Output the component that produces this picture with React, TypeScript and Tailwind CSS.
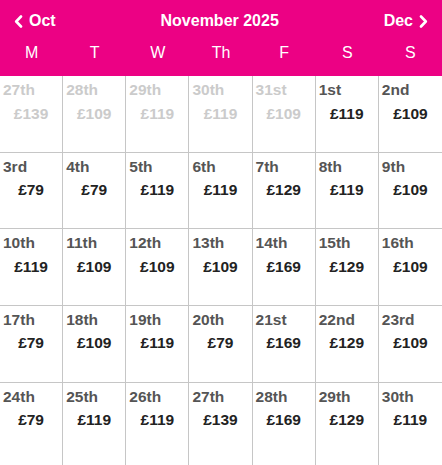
import React from "react";

type Cell = { d: string; p: string; out?: boolean };

const rows: Cell[][] = [
  [
    { d: "27th", p: "£139", out: true },
    { d: "28th", p: "£109", out: true },
    { d: "29th", p: "£119", out: true },
    { d: "30th", p: "£119", out: true },
    { d: "31st", p: "£109", out: true },
    { d: "1st", p: "£119" },
    { d: "2nd", p: "£109" },
  ],
  [
    { d: "3rd", p: "£79" },
    { d: "4th", p: "£79" },
    { d: "5th", p: "£119" },
    { d: "6th", p: "£119" },
    { d: "7th", p: "£129" },
    { d: "8th", p: "£119" },
    { d: "9th", p: "£109" },
  ],
  [
    { d: "10th", p: "£119" },
    { d: "11th", p: "£109" },
    { d: "12th", p: "£109" },
    { d: "13th", p: "£109" },
    { d: "14th", p: "£169" },
    { d: "15th", p: "£129" },
    { d: "16th", p: "£109" },
  ],
  [
    { d: "17th", p: "£79" },
    { d: "18th", p: "£109" },
    { d: "19th", p: "£119" },
    { d: "20th", p: "£79" },
    { d: "21st", p: "£169" },
    { d: "22nd", p: "£129" },
    { d: "23rd", p: "£109" },
  ],
  [
    { d: "24th", p: "£79" },
    { d: "25th", p: "£119" },
    { d: "26th", p: "£119" },
    { d: "27th", p: "£139" },
    { d: "28th", p: "£169" },
    { d: "29th", p: "£129" },
    { d: "30th", p: "£119" },
  ],
];

const days = ["M", "T", "W", "Th", "F", "S", "S"];

function ChevronLeft() {
  return (
    <svg width="9" height="13" viewBox="0 0 9 13" fill="none">
      <path d="M7 1.5 L2.2 6.5 L7 11.5" stroke="white" strokeWidth="2.6" strokeLinecap="round" strokeLinejoin="round" />
    </svg>
  );
}

function ChevronRight() {
  return (
    <svg width="9" height="13" viewBox="0 0 9 13" fill="none">
      <path d="M2 1.5 L6.8 6.5 L2 11.5" stroke="white" strokeWidth="2.6" strokeLinecap="round" strokeLinejoin="round" />
    </svg>
  );
}

export default function App() {
  return (
    <div
      className="w-[442px] h-[465px] overflow-hidden flex flex-col bg-white"
      style={{ fontFamily: '"Liberation Sans", Arial, sans-serif' }}
    >
      <div className="h-[76px] bg-[#ec0184] text-white flex flex-col shrink-0">
        <div className="h-[42px] flex items-center justify-between px-[14px] text-[16px] font-bold leading-[20px]">
          <div className="flex items-center gap-[6px]">
            <ChevronLeft />
            <span>Oct</span>
          </div>
          <span>November 2025</span>
          <div className="flex items-center gap-[6px]">
            <span>Dec</span>
            <ChevronRight />
          </div>
        </div>
        <div className="h-[22px] grid grid-cols-7 items-center text-[16px] leading-[20px]">
          {days.map((d, i) => (
            <div key={i} className="text-center">
              {d}
            </div>
          ))}
        </div>
      </div>
      <div className="flex-1 grid grid-cols-7 grid-rows-[76.67px_76.67px_76.67px_76.67px_1fr]">
        {rows.map((row, ri) =>
          row.map((c, ci) => (
            <div
              key={`${ri}-${ci}`}
              className={`pt-[4px] pl-[3px] font-bold text-[15.5px] leading-[20px] border-[#c6c6c6] ${
                ci < 6 ? "border-r" : ""
              } ${ri < 4 ? "border-b" : ""}`}
            >
              <div className={c.out ? "text-[#cbcbcb]" : "text-[#555555]"}>{c.d}</div>
              <div className={`mt-[3.5px] text-center pr-[3px] ${c.out ? "text-[#cbcbcb]" : "text-[#222222]"}`}>
                {c.p}
              </div>
            </div>
          ))
        )}
      </div>
    </div>
  );
}
